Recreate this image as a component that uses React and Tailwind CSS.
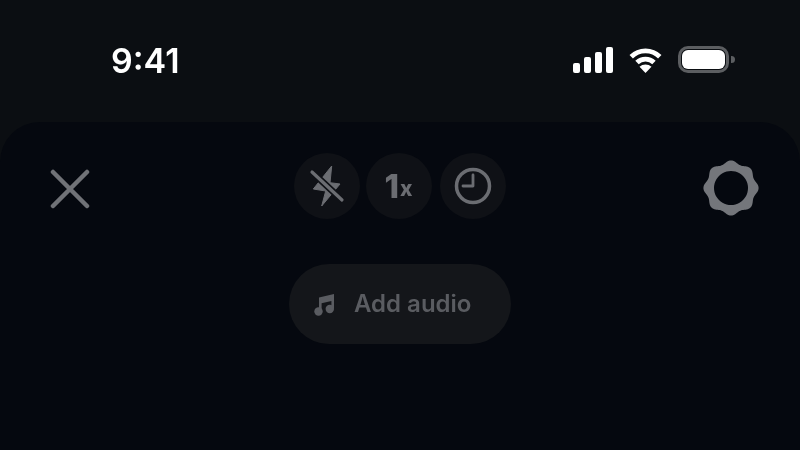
import React from 'react'

// 8-lobed gear outline, the hole is cut out with evenodd
const gearPath = () => {
    const points = [];
    for (let i = 0; i < 160; i++) {
        const a = (i / 160) * Math.PI * 2;
        const lobe = (1 + Math.cos(8 * a)) / 2;
        const r = 24.5 + 3.1 * lobe;
        points.push(`${(28 + r * Math.sin(a)).toFixed(2)} ${(28 - r * Math.cos(a)).toFixed(2)}`);
    }
    return `M${points.join('L')}Z M28 11a17 17 0 1 0 .01 0Z`;
};

const StatusIcons = () => (
    <div className="flex items-center">
        <svg width="40" height="26" viewBox="0 0 40 26" fill="white">
            <rect x="0" y="16" width="7" height="10" rx="2" />
            <rect x="11" y="10" width="7" height="16" rx="2" />
            <rect x="22" y="5" width="7" height="21" rx="2" />
            <rect x="33" y="0" width="7" height="26" rx="2" />
        </svg>
        <svg className="ml-[14px]" width="37" height="27" viewBox="0 0 36 28" fill="none" stroke="white" strokeWidth="5">
            <path d="M3.2 11.2A21 21 0 0 1 32.8 11.2" />
            <path d="M9.2 17.2A12.5 12.5 0 0 1 26.8 17.2" />
            <path d="M18 28L11.8 21.6A9 9 0 0 1 24.2 21.6Z" fill="white" stroke="none" />
        </svg>
        <div className="ml-[14px] flex items-center">
            <div className="w-[51px] h-[27px] rounded-[10px] border-[3px] border-[#5c5e61] p-[1px]">
                <div className="w-full h-full rounded-[6px] bg-white"></div>
            </div>
            <div className="ml-[2px] w-[4px] h-[7px] rounded-r-full bg-[#5c5e61]"></div>
        </div>
    </div>
);

const RoundButton = ({ children, className = '' }) => (
    <div className={`w-[66px] h-[66px] rounded-full bg-[#0f1116] flex items-center justify-center ${className}`}>
        {children}
    </div>
);

const App = () => {
    return (
        <div className="w-[800px] h-[450px] overflow-hidden bg-[#0b0e12] flex flex-col font-['Inter',sans-serif] blur-[0.4px]">
            <div className="h-[122px] shrink-0 flex items-start justify-between pl-[111px] pr-[65px] pt-[46px]">
                <span className="text-[34px] leading-[27px] font-semibold text-white mt-[1px]">9:41</span>
                <StatusIcons />
            </div>

            <div className="flex-1 rounded-t-[40px] bg-[#05080f] flex flex-col">
                <div className="flex items-start justify-between pl-[50px] pr-[41px] pt-[31px]">
                    <svg className="mt-[16px]" width="40" height="40" viewBox="0 0 40 40" fill="none" stroke="#707277" strokeWidth="4.5" strokeLinecap="round">
                        <path d="M3 3L37 37M37 3L3 37" />
                    </svg>

                    <div className="flex items-center ml-[6px]">
                        <RoundButton>
                            <svg width="40" height="44" viewBox="0 0 40 44">
                                <path d="M24.7 2L6.3 25L18.7 27L14.7 42L33 20L23 18.7Z" fill="#6b6d72" stroke="#6b6d72" strokeWidth="1" strokeLinejoin="round" />
                                <path d="M5 8L35 36" stroke="#0f1116" strokeWidth="6.5" />
                                <path d="M5 8L35 36" stroke="#6b6d72" strokeWidth="3.2" strokeLinecap="round" />
                            </svg>
                        </RoundButton>
                        <RoundButton className="ml-[6px]">
                            <span className="text-[#6b6d72] font-extrabold text-[33px] leading-none">1</span>
                            <span className="text-[#6b6d72] font-extrabold text-[21px] leading-none mt-[5px] ml-[1px]">x</span>
                        </RoundButton>
                        <RoundButton className="ml-[8px]">
                            <svg width="38" height="38" viewBox="0 0 38 38" fill="none" stroke="#6b6d72" strokeWidth="3.5" strokeLinecap="round" strokeLinejoin="round">
                                <circle cx="19" cy="19" r="16.5" />
                                <path d="M19 8V19H9" strokeWidth="2.8" />
                            </svg>
                        </RoundButton>
                    </div>

                    <svg className="mt-[7px]" width="56" height="56" viewBox="0 0 56 56">
                        <path d={gearPath()} fill="#74767b" fillRule="evenodd" />
                    </svg>
                </div>

                <div className="flex justify-center mt-[45px]">
                    <div className="w-[222px] h-[80px] rounded-full bg-[#14161a] flex items-center pl-[25px]">
                        <svg width="22" height="23" viewBox="0 0 22 23" fill="#5a5c61">
                            <path d="M5 4.5L20 1V15.5H17.4V8L7.6 10.2V18.5H5Z" />
                            <circle cx="4.5" cy="18.5" r="4.2" />
                            <circle cx="15.8" cy="16" r="4.2" />
                        </svg>
                        <span className="ml-[18px] text-[24px] font-semibold text-[#5a5c61] leading-none">Add audio</span>
                    </div>
                </div>
            </div>
        </div>
    )
}

export default App
